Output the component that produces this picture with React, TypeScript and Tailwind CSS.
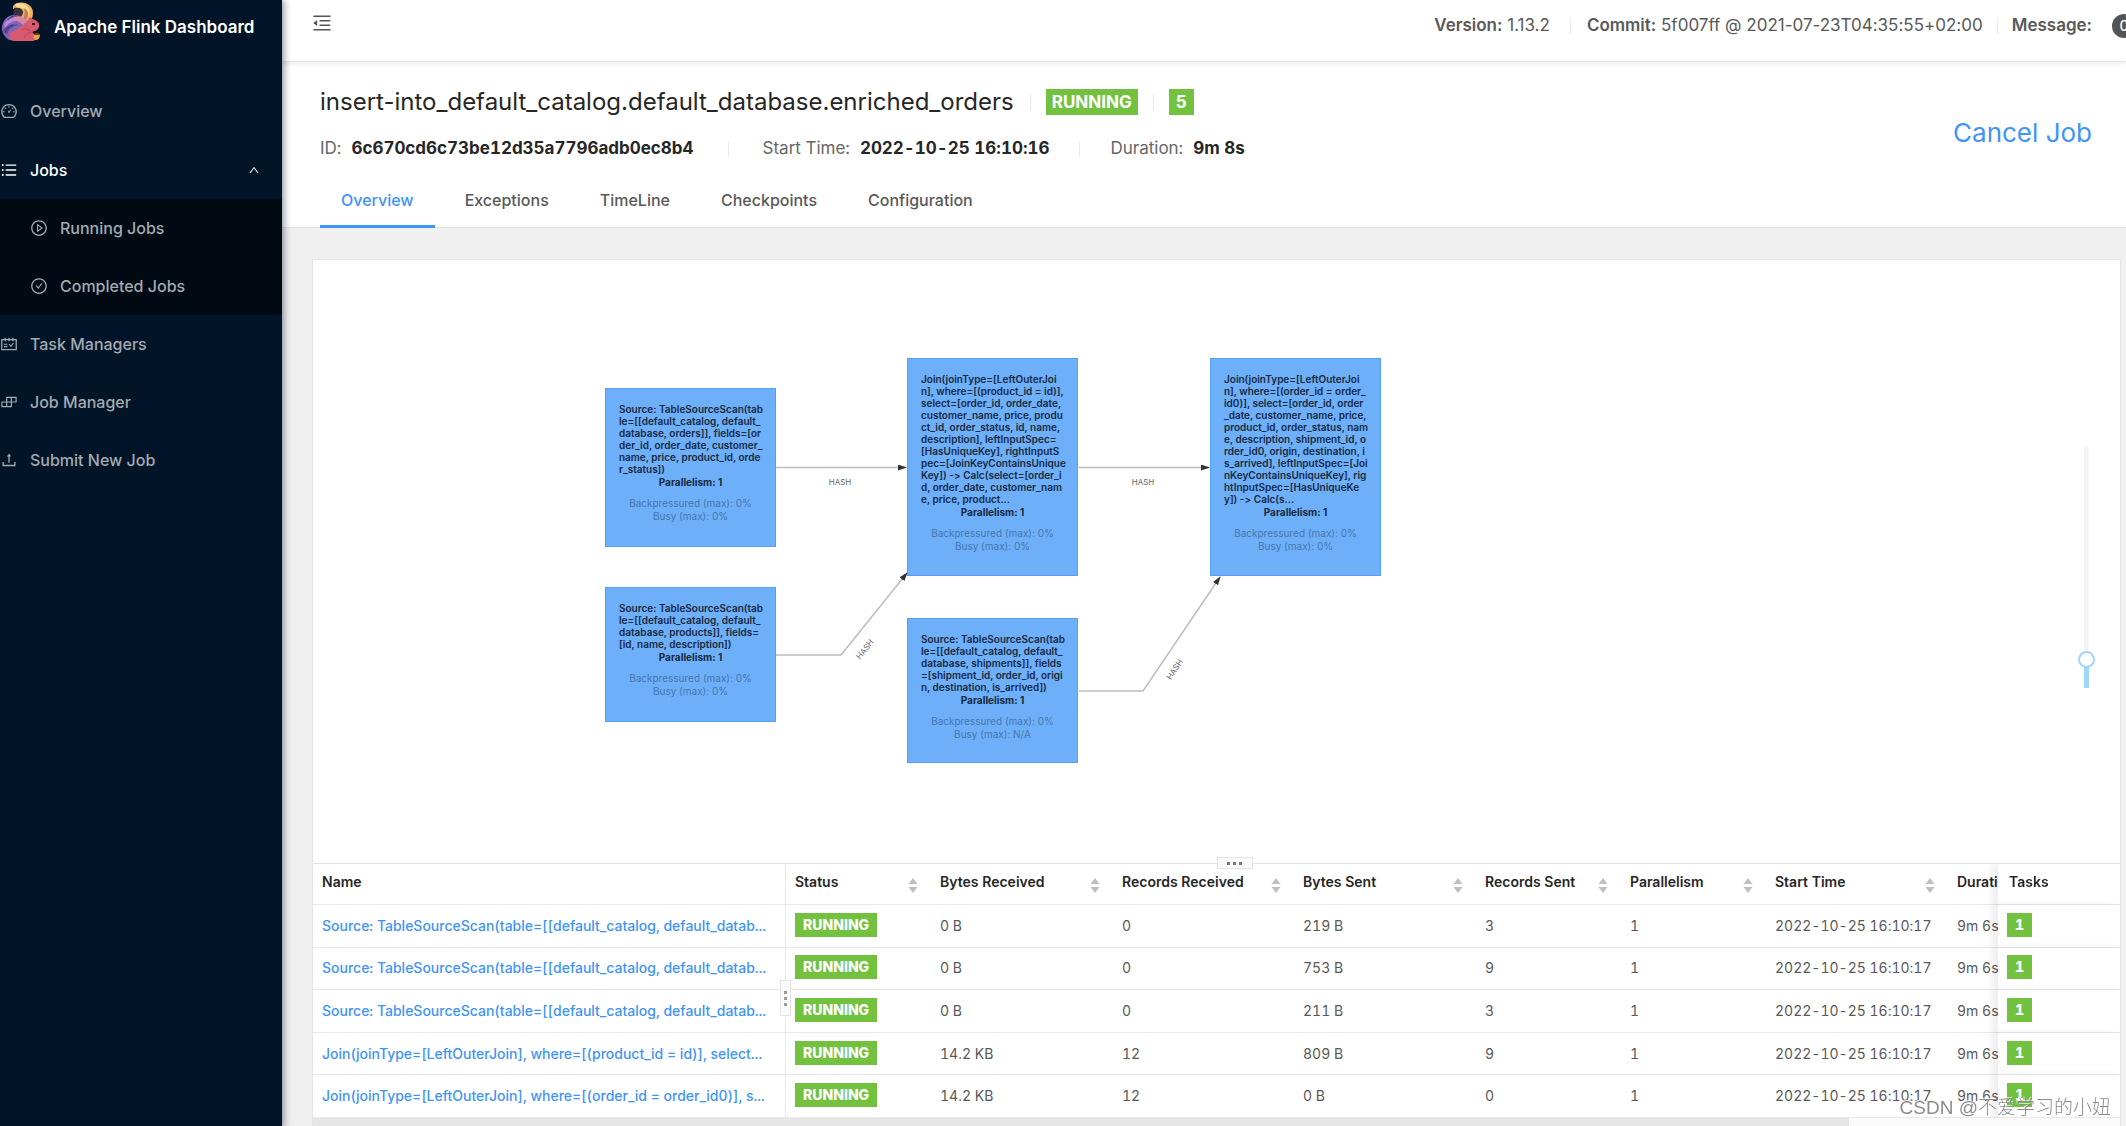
import React, { useState } from "react";
import {
  AiOutlineBuild,
  AiOutlineCheckCircle,
  AiOutlineDashboard,
  AiOutlineMenuFold,
  AiOutlinePlayCircle,
  AiOutlineSchedule,
  AiOutlineUnorderedList,
  AiOutlineUp,
  AiOutlineUpload,
} from "react-icons/ai";

function Logo() {
  return (
    <svg viewBox="0 0 40 42" className="h-[42px] w-10 shrink-0" aria-hidden="true">
      <path d="M13 6C16 2 24 1 29 5c4 3 5 8 3 13l-6 4-7-3 4-6c0-4-4-6-10-4z" fill="#f0b05c" />
      <path d="M15 4c4-2 10-1 13 3 2 3 2 6 1 9-1-6-6-9-12-8z" fill="#f9dc92" />
      <path d="M14 8c5-1 9 1 9 5l-3 6-7-1z" fill="#3b3140" />
      <path d="M24 8c5 2 5 7 2 12l-6 3c4-5 6-9 4-15z" fill="#c9795a" />
      <path d="M20 16C12 13 5 17 3 23c-3 6 0 13 6 17 5 1 12 1 17-1l6-14z" fill="#8463b8" />
      <path d="M4 24c4-7 13-8 19-3-8-2-14 1-18 7z" fill="#b98ad8" />
      <path d="M3 31c3-6 10-8 16-6-6 1-11 4-12 10z" fill="#5e4a97" />
      <path d="M8 20c3-4 7-5 11-3M5 33c1-4 4-7 8-8" fill="none" stroke="#3d3474" strokeWidth="1" />
      <path d="M14 17c5-2 10 0 14 4l-5 4c-3-3-6-5-10-5z" fill="#d48aa6" />
      <path d="M28 20c1-3 3-3 4-1 5 1 8 4 7 8-1 4-5 4-7 5 3 2 5 6 2 9H14c-4-1-6-5-4-8 4-2 8-4 12-7z" fill="#d9596f" />
      <path d="M21 30c4-2 8-1 10 2-4 1-6 3-7 6" fill="none" stroke="#b34761" strokeWidth="1" />
      <path d="M32 24h3" stroke="#3a1c2c" strokeWidth="2" />
      <path d="M34 35c1-2 5-2 6 0 0 3-2 5-4 5s-3-2-2-5z" fill="#e8a33d" />
      <path d="M34 35c1-3 5-3 6 0z" fill="#6e3a28" />
    </svg>
  );
}

const menuItem = "flex h-[58px] w-full items-center gap-3 text-base font-medium";

function Sidebar() {
  return (
    <aside className="relative z-20 w-[282px] shrink-0 bg-[#021427] text-[#a3aab2] shadow-[2px_0_7px_rgba(0,21,41,0.45)]">
      <div className="flex h-[82px] items-start gap-[14px]">
        <Logo />
        <h1 className="pt-[14px] text-[17px] leading-[26px] font-semibold whitespace-nowrap text-white">Apache Flink Dashboard</h1>
      </div>
      <nav>
        <a href="#overview" className={menuItem}>
          <AiOutlineDashboard className="size-[18px]" />
          Overview
        </a>
        <button type="button" aria-expanded="true" className="flex h-[59px] w-full items-center gap-3 pr-[22px] text-base font-medium text-white">
          <AiOutlineUnorderedList className="size-[18px]" />
          <span>Jobs</span>
          <AiOutlineUp className="ml-auto size-3" />
        </button>
        <div className="bg-[#010a13] pl-[30px]">
          <a href="#running" className={menuItem}>
            <AiOutlinePlayCircle className="size-[18px]" />
            Running Jobs
          </a>
          <a href="#completed" className={menuItem}>
            <AiOutlineCheckCircle className="size-[18px]" />
            Completed Jobs
          </a>
        </div>
        <a href="#task-managers" className={menuItem}>
          <AiOutlineSchedule className="size-[18px]" />
          Task Managers
        </a>
        <a href="#job-manager" className={menuItem}>
          <AiOutlineBuild className="size-[18px]" />
          Job Manager
        </a>
        <a href="#submit" className={menuItem}>
          <AiOutlineUpload className="size-[18px]" />
          Submit New Job
        </a>
      </nav>
    </aside>
  );
}

function TopBar() {
  return (
    <header className="relative z-10 flex h-[62px] items-start justify-between border-b border-[#e8e8e8] bg-white pl-[29px] shadow-[0_1px_5px_rgba(0,21,41,0.1)]">
      <button type="button" aria-label="Collapse menu" className="mt-3 text-[#555]">
        <AiOutlineMenuFold className="size-[22px]" />
      </button>
      <div className="-mr-[10px] flex h-[52px] items-center text-[17px] whitespace-nowrap text-[#595959]">
        <span><b className="font-semibold">Version:</b> 1.13.2</span>
        <span className="mr-4 ml-5 h-[15px] w-px bg-[#e8e8e8]" />
        <span><b className="font-semibold">Commit:</b> 5f007ff @ 2021-07-23T04:35:55+02:00</span>
        <span className="mx-[14px] h-[15px] w-px bg-[#e8e8e8]" />
        <b className="font-semibold">Message:</b>
        <span className="ml-5 flex h-6 w-6 items-center justify-center rounded-full bg-[#555] text-sm font-medium text-white">0</span>
      </div>
    </header>
  );
}

const TABS = ["Overview", "Exceptions", "TimeLine", "Checkpoints", "Configuration"];

function JobHeader() {
  return (
    <section className="flex justify-between border-b border-[#e4e4e4] bg-white pr-[34px] pl-[38px]">
      <div className="whitespace-nowrap">
        <div className="mt-6 flex h-8 items-center">
          <h2 className="text-2xl text-[#262626]">insert-into_default_catalog.default_database.enriched_orders</h2>
          <span className="mr-[15px] ml-4 h-4 w-px bg-[#e8e8e8]" />
          <span className="bg-[#72c240] px-[6px] pt-px text-[17px] leading-[25px] font-bold text-white">RUNNING</span>
          <span className="mx-[15px] h-4 w-px bg-[#e8e8e8]" />
          <span className="bg-[#72c240] px-[7px] pt-px text-[17px] leading-[25px] font-bold text-white">5</span>
        </div>
        <dl className="mt-[17px] flex h-7 items-center text-[17px] text-[#666] tabular-nums">
          <dt>ID:</dt>
          <dd className="ml-[10px] font-bold text-[#262626]">6c670cd6c73be12d35a7796adb0ec8b4</dd>
          <dt className="ml-[34px] flex items-center gap-[34px]"><span className="h-[15px] w-px bg-[#e8e8e8]" />Start Time:</dt>
          <dd className="ml-[10px] font-bold text-[#262626]">2022-10-25 16:10:16</dd>
          <dt className="ml-[30px] flex items-center gap-[30px]"><span className="h-[15px] w-px bg-[#e8e8e8]" />Duration:</dt>
          <dd className="ml-[10px] font-bold text-[#262626]">9m 8s</dd>
        </dl>
        <div role="tablist" className="mt-[11px] -mb-px flex gap-[9px]">
          {TABS.map((t, i) => (
            <button
              key={t}
              type="button"
              role="tab"
              aria-selected={i === 0}
              className={
                i === 0
                  ? "h-[54px] border-b-[3px] border-[#3f94f8] px-[21px] text-base font-medium text-[#3f94f8]"
                  : "h-[54px] border-b-[3px] border-transparent px-[21px] text-base font-medium text-[#595959]"
              }
            >
              {t}
            </button>
          ))}
        </div>
      </div>
      <button type="button" className="mt-[51px] self-start text-[26px] leading-10 text-[#3f94f8]">Cancel Job</button>
    </section>
  );
}

type GraphNode = { place: string; lines: string[]; busy: string };

const NODES: GraphNode[] = [
  {
    place: "left-[292px] top-[128px] h-[159px]",
    lines: [
      "Source: TableSourceScan(tab",
      "le=[[default_catalog, default_",
      "database, orders]], fields=[or",
      "der_id, order_date, customer_",
      "name, price, product_id, orde",
      "r_status])",
    ],
    busy: "0%",
  },
  {
    place: "left-[292px] top-[327px] h-[135px]",
    lines: [
      "Source: TableSourceScan(tab",
      "le=[[default_catalog, default_",
      "database, products]], fields=",
      "[id, name, description])",
    ],
    busy: "0%",
  },
  {
    place: "left-[594px] top-[98px] h-[218px]",
    lines: [
      "Join(joinType=[LeftOuterJoi",
      "n], where=[(product_id = id)],",
      "select=[order_id, order_date,",
      "customer_name, price, produ",
      "ct_id, order_status, id, name,",
      "description], leftInputSpec=",
      "[HasUniqueKey], rightInputS",
      "pec=[JoinKeyContainsUnique",
      "Key]) -> Calc(select=[order_i",
      "d, order_date, customer_nam",
      "e, price, product...",
    ],
    busy: "0%",
  },
  {
    place: "left-[594px] top-[358px] h-[145px]",
    lines: [
      "Source: TableSourceScan(tab",
      "le=[[default_catalog, default_",
      "database, shipments]], fields",
      "=[shipment_id, order_id, origi",
      "n, destination, is_arrived])",
    ],
    busy: "N/A",
  },
  {
    place: "left-[897px] top-[98px] h-[218px]",
    lines: [
      "Join(joinType=[LeftOuterJoi",
      "n], where=[(order_id = order_",
      "id0)], select=[order_id, order",
      "_date, customer_name, price,",
      "product_id, order_status, nam",
      "e, description, shipment_id, o",
      "rder_id0, origin, destination, i",
      "s_arrived], leftInputSpec=[Joi",
      "nKeyContainsUniqueKey], rig",
      "htInputSpec=[HasUniqueKe",
      "y]) -> Calc(s...",
    ],
    busy: "0%",
  },
];

function Edges() {
  return (
    <svg className="absolute top-0 left-0 h-[603px] w-[1200px]" viewBox="0 0 1200 603" fill="none" stroke="#bdbdbd" strokeWidth="1.5" aria-hidden="true">
      <defs>
        <marker id="arrow" viewBox="0 0 9 6" refX="8" refY="3" markerWidth="9" markerHeight="6" markerUnits="userSpaceOnUse" orient="auto">
          <path d="M0 0 9 3 0 6z" fill="#333" stroke="none" />
        </marker>
      </defs>
      <path d="M463 207.500H593" markerEnd="url(#arrow)" />
      <path d="M463 395H528L594 313" markerEnd="url(#arrow)" />
      <path d="M766 207.500H896" markerEnd="url(#arrow)" />
      <path d="M766 431H830L907 317" markerEnd="url(#arrow)" />
      <g fill="#666" stroke="none" fontSize="8" textAnchor="middle" fontFamily="Inter">
        <text x="527" y="225">HASH</text>
        <text x="830" y="225">HASH</text>
        <text transform="translate(554 391) rotate(-51)">HASH</text>
        <text transform="translate(864 411) rotate(-56)">HASH</text>
      </g>
    </svg>
  );
}

function Graph() {
  const [zoom, setZoom] = useState(9);
  return (
    <div className="relative min-h-[603px] flex-1 overflow-hidden">
      <Edges />
      {NODES.map((n) => (
        <div
          key={n.place}
          className={
            "absolute w-[171px] border border-[#559ffa] bg-[#6eaff9] px-[13px] pt-[14px] text-center text-[10px] leading-3 whitespace-pre text-[#16293d] " +
            n.place
          }
        >
          <p className="text-left font-semibold">{n.lines.join("\n")}</p>
          <p className="mt-px font-bold">Parallelism: 1</p>
          <p className="mt-[9px] leading-[13px] text-[#4577ad]">{"Backpressured (max): 0%\nBusy (max): " + n.busy}</p>
        </div>
      ))}
      <input
        type="range"
        aria-label="Zoom"
        value={zoom}
        onChange={(e) => setZoom(Number(e.target.value))}
        className="absolute top-[187px] right-[25px] h-[241px] w-[17px] appearance-none bg-[linear-gradient(to_top,#a0d5fb_12%,#f4f4f4_12%)] bg-size-[5px_100%] bg-center bg-no-repeat [direction:rtl] [writing-mode:vertical-lr] [&::-webkit-slider-thumb]:size-[17px] [&::-webkit-slider-thumb]:appearance-none [&::-webkit-slider-thumb]:rounded-full [&::-webkit-slider-thumb]:border-2 [&::-webkit-slider-thumb]:border-[#a0d5fb] [&::-webkit-slider-thumb]:bg-white"
      />
    </div>
  );
}

const ROWS = [
  ["Source: TableSourceScan(table=[[default_catalog, default_datab...", "0 B", "0", "219 B", "3"],
  ["Source: TableSourceScan(table=[[default_catalog, default_datab...", "0 B", "0", "753 B", "9"],
  ["Source: TableSourceScan(table=[[default_catalog, default_datab...", "0 B", "0", "211 B", "3"],
  ["Join(joinType=[LeftOuterJoin], where=[(product_id = id)], select...", "14.2 KB", "12", "809 B", "9"],
  ["Join(joinType=[LeftOuterJoin], where=[(order_id = order_id0)], s...", "14.2 KB", "12", "0 B", "0"],
];

const HEADS = ["Status", "Bytes Received", "Records Received", "Bytes Sent", "Records Sent", "Parallelism", "Start Time", "Duration"];

const cell = "border-b border-[#e8e8e8] px-[9px]";
const pinned = "sticky right-0 border-b border-[#e8e8e8] bg-white px-[9px] shadow-[-6px_0_8px_rgba(0,0,0,0.07)]";
const tag = "mb-[2px] inline-block bg-[#72c240] px-2 align-middle text-sm leading-6 font-extrabold text-white";

function SortIcon() {
  return (
    <svg viewBox="0 0 10 15" className="mt-[2px] h-[15px] w-[10px] shrink-0" fill="#bfbfbf" aria-hidden="true">
      <path d="M5 0 9.500 6h-9zM5 15 .5 9h9z" />
    </svg>
  );
}

function Vertices() {
  return (
    <div className="relative border-t border-[#e4e4e4]">
      <div className="overflow-hidden">
        <table className="h-[254px] w-[2121px] table-fixed border-separate border-spacing-0 text-left text-sm text-[#595959] tabular-nums">
          <colgroup>
            <col className="w-[473px]" />
            <col className="w-[145px]" />
            <col className="w-[182px]" />
            <col className="w-[181px]" />
            <col className="w-[182px]" />
            <col className="w-[145px]" />
            <col className="w-[145px]" />
            <col className="w-[182px]" />
            <col className="w-[364px]" />
            <col className="w-[122px]" />
          </colgroup>
          <thead className="text-[#262626]">
            <tr className="h-[41px]">
              <th scope="col" className="border-r border-b border-[#e8e8e8] px-[9px] pb-1 font-semibold">Name</th>
              {HEADS.map((h) => (
                <th key={h} scope="col" className={cell}>
                  <div className="flex h-[22px] items-center justify-between pr-1">
                    <span className="pb-1 font-semibold">{h}</span>
                    <SortIcon />
                  </div>
                </th>
              ))}
              <th scope="col" className={pinned}><span className="block pb-1 pl-[2px] font-semibold">Tasks</span></th>
            </tr>
          </thead>
          <tbody>
            {ROWS.map(([name, br, rr, bs, rs], i) => (
              <tr key={i}>
                <td className="border-r border-b border-[#e8e8e8] px-[9px]">
                  <a href="#vertex" className="font-medium whitespace-nowrap text-[#3f94f8]">{name}</a>
                </td>
                <td className={cell}>
                  <span className={tag}>RUNNING</span>
                </td>
                <td className={cell}>{br}</td>
                <td className={cell}>{rr}</td>
                <td className={cell}>{bs}</td>
                <td className={cell}>{rs}</td>
                <td className={cell}>1</td>
                <td className={cell}>2022-10-25 16:10:17</td>
                <td className={cell}>9m 6s</td>
                <td className={pinned}>
                  <span className={tag}>1</span>
                </td>
              </tr>
            ))}
          </tbody>
        </table>
      </div>
      <div className="h-[9px] bg-[#fafafa]">
        <div className="h-full w-[85%] bg-[#e6e6e6]" />
      </div>
      <div className="absolute -top-[7px] left-1/2 flex h-3 w-9 items-center justify-center gap-[3px] border border-[#e4e4e4] bg-[#fafafa]">
        <i className="size-[3px] bg-[#777]" />
        <i className="size-[3px] bg-[#777]" />
        <i className="size-[3px] bg-[#777]" />
      </div>
      <div className="absolute top-[116px] left-[467px] flex h-9 w-[11px] flex-col items-center justify-center gap-[3px] border border-[#e4e4e4] bg-[#fafafa]">
        <i className="size-[3px] bg-[#999]" />
        <i className="size-[3px] bg-[#999]" />
        <i className="size-[3px] bg-[#999]" />
      </div>
    </div>
  );
}

export default function App() {
  return (
    <div className="relative flex min-h-screen overflow-hidden bg-[#f0f0f0] font-['Inter',sans-serif] [font-variant-ligatures:none]">
      <Sidebar />
      <main className="flex min-w-0 flex-1 flex-col">
        <TopBar />
        <JobHeader />
        <div className="mt-[31px] mr-[5px] ml-[30px] flex flex-1 flex-col border border-b-0 border-[#e4e4e4] bg-white">
          <Graph />
          <Vertices />
        </div>
      </main>
      <p className="absolute right-[15px] bottom-[5px] z-30 font-['Liberation_Sans','Noto_Sans_CJK_SC',sans-serif] text-[19px] leading-7 font-light text-[#8c8c8c] [text-shadow:-1px_-1px_0_#ffffffcc]">
        CSDN @不爱学习的小妞
      </p>
    </div>
  );
}
